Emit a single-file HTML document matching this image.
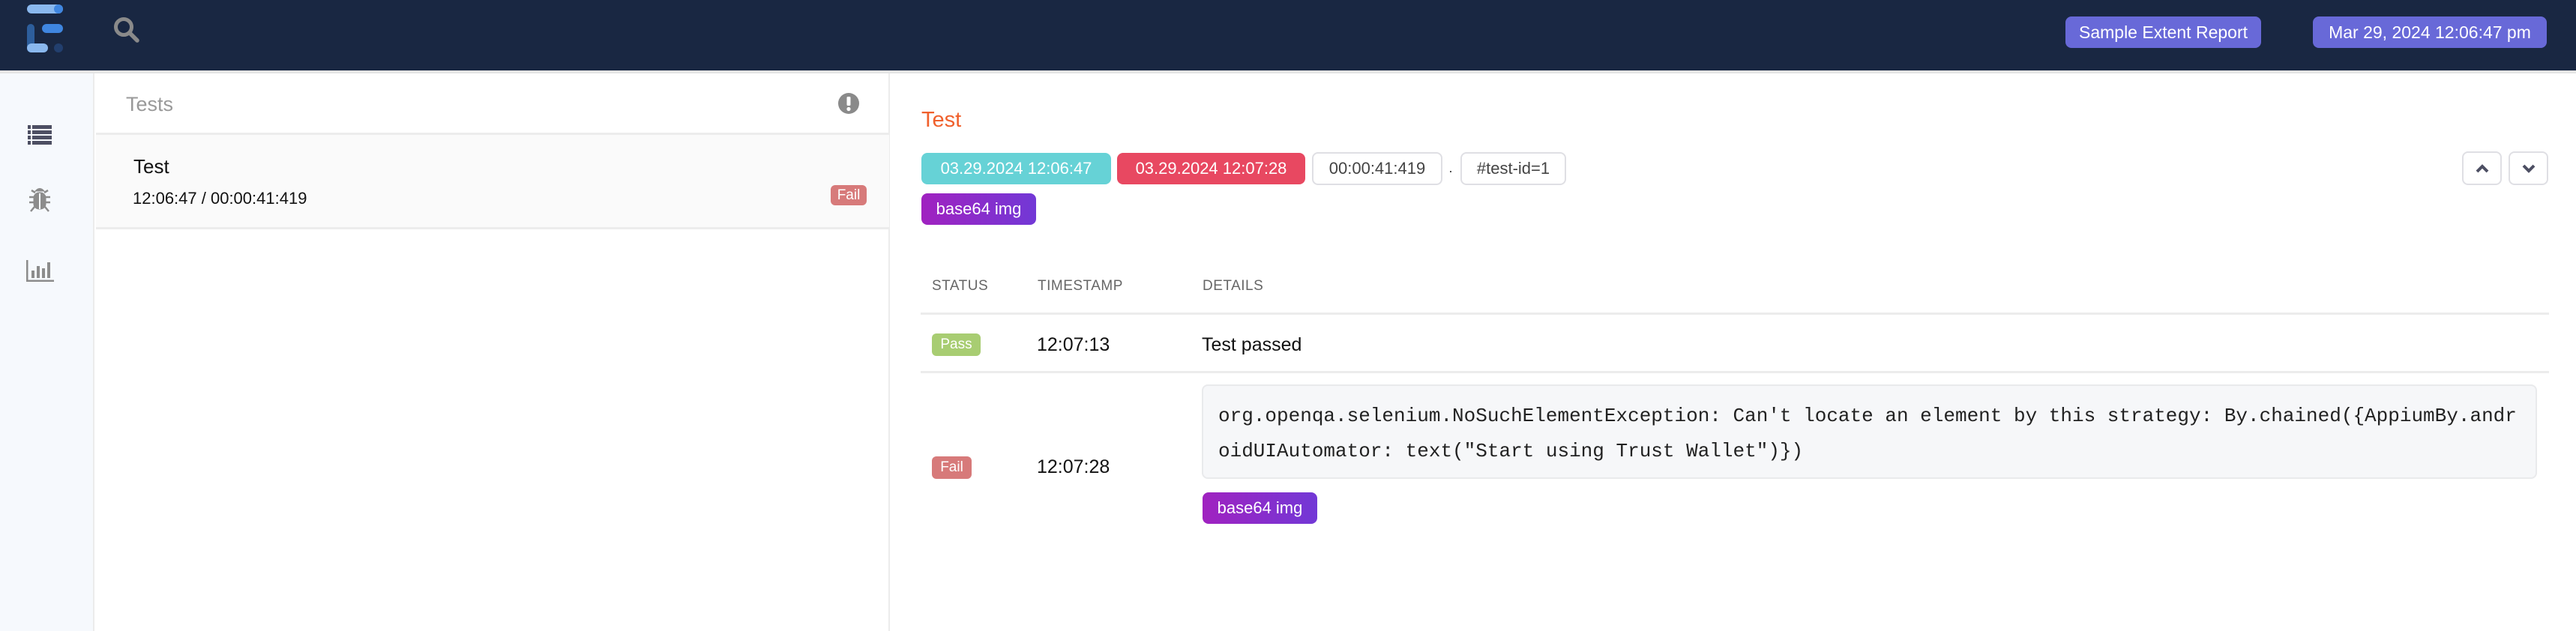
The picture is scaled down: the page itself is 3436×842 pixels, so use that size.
<!DOCTYPE html>
<html><head><meta charset="utf-8"><style>
*{margin:0;padding:0;box-sizing:border-box}
body{width:3436px;height:842px;background:#fff;font-family:"Liberation Sans",sans-serif;position:relative;overflow:hidden;color:#111}
.a{position:absolute}
.badge{position:absolute;border-radius:8px;color:#fff;font-size:22px;display:flex;align-items:center;justify-content:center;white-space:nowrap}
.th{position:absolute;font-size:19px;color:#666;letter-spacing:.5px}
</style></head><body>
<div class="a" style="left:0;top:0;width:3436px;height:94px;background:#192742"></div>
<div class="a" style="left:0;top:94px;width:3436px;height:4px;background:#e6e6e6"></div>
<!-- logo -->
<div class="a" style="left:36px;top:6px;width:48px;height:12px;border-radius:6px;background:#8ab8ee"></div>
<div class="a" style="left:72px;top:6px;width:12px;height:12px;border-radius:6px;background:#3f86e0"></div>
<div class="a" style="left:36px;top:32px;width:10px;height:38px;border-radius:5px;background:#2d5e9c"></div>
<div class="a" style="left:56px;top:32px;width:28px;height:12px;border-radius:6px;background:#3f86e0"></div>
<div class="a" style="left:36px;top:58px;width:28px;height:12px;border-radius:6px;background:#8ab8ee"></div>
<div class="a" style="left:72px;top:58px;width:12px;height:12px;border-radius:6px;background:#223f6e"></div>
<svg class="a" style="left:150px;top:22px" width="38" height="36" viewBox="0 0 38 36"><circle cx="15" cy="14" r="10.5" fill="none" stroke="#8a8a8a" stroke-width="5"/><path d="M23 22 L33 32" stroke="#8a8a8a" stroke-width="5.5" stroke-linecap="round"/></svg>
<div class="badge" style="left:2755px;top:22px;width:261px;height:42px;background:#6869d8;font-size:23px">Sample Extent Report</div>
<div class="badge" style="left:3085px;top:22px;width:312px;height:42px;background:#6869d8;font-size:23px">Mar 29, 2024 12:06:47 pm</div>
<!-- sidebar -->
<div class="a" style="left:0;top:98px;width:126px;height:744px;background:#f6f9fd;border-right:2px solid #ececec"></div>
<svg class="a" style="left:37px;top:167px" width="32" height="26" viewBox="0 0 32 26"><g fill="#4d4f63"><rect x="0" y="0" width="4" height="5"/><rect x="6" y="0" width="26" height="5"/><rect x="0" y="7" width="4" height="5"/><rect x="6" y="7" width="26" height="5"/><rect x="0" y="14" width="4" height="5"/><rect x="6" y="14" width="26" height="5"/><rect x="0" y="21" width="4" height="5"/><rect x="6" y="21" width="26" height="5"/></g></svg>
<svg class="a" style="left:38px;top:246px" width="30" height="40" viewBox="0 0 30 40"><g fill="#8c8c8c" stroke="#8c8c8c"><path d="M9 9 Q15 2 21 9 Z"/><rect x="7" y="11" width="16" height="22" rx="7"/><path d="M7 17 H1 M23 17 H29 M7 24 H1 M23 24 H29 M8 30 L3 36 M22 30 L27 36 M9 11 L4 8 M21 11 L26 8" stroke-width="2.5" fill="none"/></g><path d="M15 12 V33" stroke="#f6f9fd" stroke-width="2"/></svg>
<svg class="a" style="left:35px;top:347px" width="37" height="29" viewBox="0 0 37 29"><g fill="#8c8c8c"><rect x="0" y="0" width="2.5" height="29"/><rect x="0" y="26.5" width="37" height="2.5"/><rect x="7" y="14" width="4" height="10"/><rect x="14" y="8" width="4" height="16"/><rect x="21" y="11" width="4" height="13"/><rect x="28" y="3" width="4" height="21"/></g></svg>
<!-- tests panel -->
<div class="a" style="left:126px;top:98px;width:1061px;height:744px;border-right:2px solid #ececec"></div>
<div class="a" style="left:168px;top:124px;font-size:27px;color:#999">Tests</div>
<svg class="a" style="left:1118px;top:124px" width="28" height="28" viewBox="0 0 28 28"><circle cx="14" cy="14" r="14" fill="#8a8a8a"/><rect x="11.5" y="5" width="5" height="12" rx="1.5" fill="#fff"/><circle cx="14" cy="21.5" r="2.6" fill="#fff"/></svg>
<div class="a" style="left:128px;top:177px;width:1058px;height:3px;background:#ececec"></div>
<div class="a" style="left:128px;top:180px;width:1058px;height:126px;background:#fafafa;border-bottom:3px solid #ececec"></div>
<div class="a" style="left:178px;top:207px;font-size:26px;color:#111">Test</div>
<div class="a" style="left:177px;top:252px;font-size:22px;color:#111">12:06:47 / 00:00:41:419</div>
<div class="badge" style="left:1108px;top:247px;width:48px;height:27px;background:#d77a7a;font-size:19px;border-radius:6px">Fail</div>
<!-- right panel -->
<div class="a" style="left:1229px;top:144px;font-size:29px;color:#f0602c">Test</div>
<div class="badge" style="left:1229px;top:204px;width:253px;height:42px;background:#66d2d6">03.29.2024 12:06:47</div>
<div class="badge" style="left:1490px;top:204px;width:251px;height:42px;background:#e84861">03.29.2024 12:07:28</div>
<div class="badge" style="left:1750px;top:203px;width:174px;height:44px;border:2px solid #dfdfe4;color:#444">00:00:41:419</div>
<div class="a" style="left:1932px;top:218px;font-size:18px;color:#333">·</div>
<div class="badge" style="left:1948px;top:203px;width:141px;height:44px;border:2px solid #dfdfe4;color:#444">#test-id=1</div>
<div class="badge" style="left:1229px;top:258px;width:153px;height:42px;background:linear-gradient(90deg,#a022c0,#7238d6)">base64 img</div>
<div class="badge" style="left:3284px;top:202px;width:53px;height:45px;border:2px solid #dfdfe4"><svg width="20" height="14" viewBox="0 0 20 14"><path d="M3 11 L10 4 L17 11" fill="none" stroke="#4d4f63" stroke-width="4"/></svg></div>
<div class="badge" style="left:3346px;top:202px;width:53px;height:45px;border:2px solid #dfdfe4"><svg width="20" height="14" viewBox="0 0 20 14"><path d="M3 3 L10 10 L17 3" fill="none" stroke="#4d4f63" stroke-width="4"/></svg></div>
<div class="th" style="left:1243px;top:371px">STATUS</div>
<div class="th" style="left:1384px;top:371px">TIMESTAMP</div>
<div class="th" style="left:1604px;top:371px">DETAILS</div>
<div class="a" style="left:1228px;top:417px;width:2172px;height:3px;background:#ececec"></div>
<div class="badge" style="left:1243px;top:445px;width:65px;height:30px;background:#a8cd72;font-size:19px;border-radius:6px">Pass</div>
<div class="a" style="left:1383px;top:446px;font-size:25px">12:07:13</div>
<div class="a" style="left:1603px;top:446px;font-size:25px">Test passed</div>
<div class="a" style="left:1228px;top:495px;width:2172px;height:3px;background:#ececec"></div>
<div class="badge" style="left:1243px;top:609px;width:53px;height:30px;background:#d77a7a;font-size:19px;border-radius:6px">Fail</div>
<div class="a" style="left:1383px;top:609px;font-size:25px">12:07:28</div>
<div class="a" style="left:1603px;top:513px;width:1781px;height:126px;background:#f6f7f9;border:2px solid #e9eaec;border-radius:8px;overflow:hidden">
<pre style="font-family:'Liberation Mono',monospace;font-size:26px;line-height:47px;color:#222;padding:17px 0 0 20px;white-space:pre">org.openqa.selenium.NoSuchElementException: Can't locate an element by this strategy: By.chained({AppiumBy.andr
oidUIAutomator: text("Start using Trust Wallet")})
        at io.appium.java_client.pagefactory.AppiumElementLocator.findElement(AppiumElementLocator.java:133)</pre></div>
<div class="badge" style="left:1604px;top:657px;width:153px;height:42px;background:linear-gradient(90deg,#a022c0,#7238d6)">base64 img</div>
</body></html>
